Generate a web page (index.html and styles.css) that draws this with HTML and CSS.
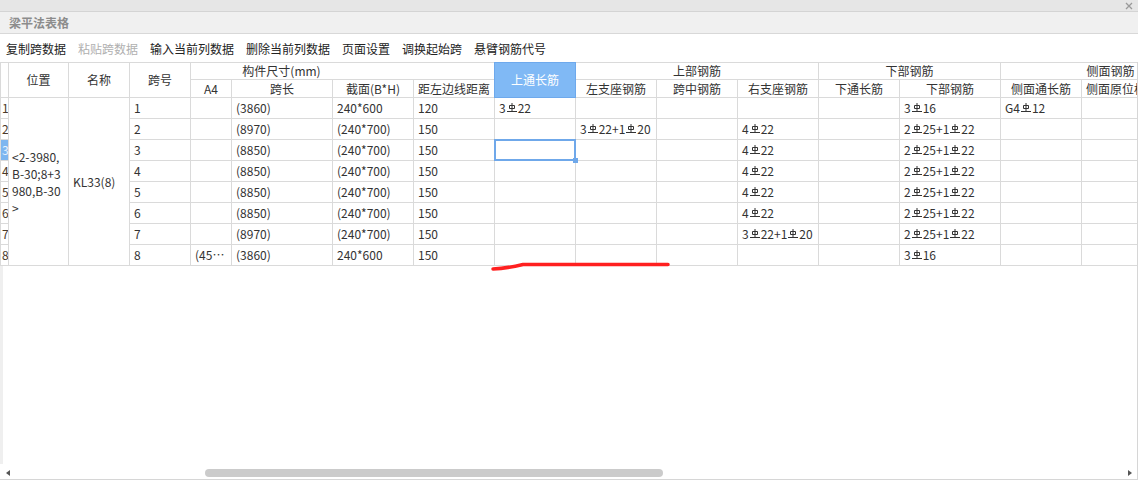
FILE: index.html
```html
<!DOCTYPE html>
<html lang="zh-CN">
<head>
<meta charset="utf-8">
<title>梁平法表格</title>
<link rel="stylesheet" href="styles.css">
</head>
<body>
<div class="window">
  <div class="topbar">
    <svg class="close" width="8" height="8" viewBox="0 0 8 8"><path d="M1 1L7 7M7 1L1 7"/></svg>
  </div>
  <div class="titlebar">梁平法表格</div>
  <div class="toolbar">
    <span class="tb">复制跨数据</span>
    <span class="tb disabled">粘贴跨数据</span>
    <span class="tb">输入当前列数据</span>
    <span class="tb">删除当前列数据</span>
    <span class="tb">页面设置</span>
    <span class="tb">调换起始跨</span>
    <span class="tb">悬臂钢筋代号</span>
  </div>
  <div class="sheet">
    <div class="grid-area">
      <div class="grid">
        <!-- header row 1 -->
        <div class="c h idx rs2"></div>
        <div class="c h rs2">位置</div>
        <div class="c h rs2">名称</div>
        <div class="c h rs2">跨号</div>
        <div class="c h cs4 grp-size">构件尺寸(mm)</div>
        <div class="c h rs2 active-head">上通长筋</div>
        <div class="c h cs3">上部钢筋</div>
        <div class="c h cs2">下部钢筋</div>
        <div class="c h cs3">侧面钢筋</div>
        <!-- header row 2 -->
        <div class="c h">A4</div>
        <div class="c h">跨长</div>
        <div class="c h">截面(B*H)</div>
        <div class="c h">距左边线距离</div>
        <div class="c h">左支座钢筋</div>
        <div class="c h">跨中钢筋</div>
        <div class="c h">右支座钢筋</div>
        <div class="c h">下通长筋</div>
        <div class="c h">下部钢筋</div>
        <div class="c h">侧面通长筋</div>
        <div class="c h">侧面原位标注</div>
        <div class="c h"></div>

        <!-- row 1 -->
        <div class="c idx">1</div>
        <div class="c pos rs8">&lt;2-3980,B-30;8+3980,B-30&gt;</div>
        <div class="c name rs8">KL33(8)</div>
        <div class="c">1</div>
        <div class="c"></div>
        <div class="c">(3860)</div>
        <div class="c">240*600</div>
        <div class="c">120</div>
        <div class="c">3<svg class="rb" viewBox="0 0 10 9"><path d="M5 0V8M2.5 2.5h5v3h-5zM0 8.5h10"/></svg>22</div>
        <div class="c"></div>
        <div class="c"></div>
        <div class="c"></div>
        <div class="c"></div>
        <div class="c">3<svg class="rb" viewBox="0 0 10 9"><path d="M5 0V8M2.5 2.5h5v3h-5zM0 8.5h10"/></svg>16</div>
        <div class="c">G4<svg class="rb" viewBox="0 0 10 9"><path d="M5 0V8M2.5 2.5h5v3h-5zM0 8.5h10"/></svg>12</div>
        <div class="c"></div>
        <div class="c"></div>

        <!-- row 2 -->
        <div class="c idx">2</div>
        <div class="c">2</div>
        <div class="c"></div>
        <div class="c">(8970)</div>
        <div class="c">(240*700)</div>
        <div class="c">150</div>
        <div class="c"></div>
        <div class="c">3<svg class="rb" viewBox="0 0 10 9"><path d="M5 0V8M2.5 2.5h5v3h-5zM0 8.5h10"/></svg>22+1<svg class="rb" viewBox="0 0 10 9"><path d="M5 0V8M2.5 2.5h5v3h-5zM0 8.5h10"/></svg>20</div>
        <div class="c"></div>
        <div class="c">4<svg class="rb" viewBox="0 0 10 9"><path d="M5 0V8M2.5 2.5h5v3h-5zM0 8.5h10"/></svg>22</div>
        <div class="c"></div>
        <div class="c">2<svg class="rb" viewBox="0 0 10 9"><path d="M5 0V8M2.5 2.5h5v3h-5zM0 8.5h10"/></svg>25+1<svg class="rb" viewBox="0 0 10 9"><path d="M5 0V8M2.5 2.5h5v3h-5zM0 8.5h10"/></svg>22</div>
        <div class="c"></div>
        <div class="c"></div>
        <div class="c"></div>

        <!-- row 3 -->
        <div class="c idx cur">3</div>
        <div class="c">3</div>
        <div class="c"></div>
        <div class="c">(8850)</div>
        <div class="c">(240*700)</div>
        <div class="c">150</div>
        <div class="c selected"></div>
        <div class="c"></div>
        <div class="c"></div>
        <div class="c">4<svg class="rb" viewBox="0 0 10 9"><path d="M5 0V8M2.5 2.5h5v3h-5zM0 8.5h10"/></svg>22</div>
        <div class="c"></div>
        <div class="c">2<svg class="rb" viewBox="0 0 10 9"><path d="M5 0V8M2.5 2.5h5v3h-5zM0 8.5h10"/></svg>25+1<svg class="rb" viewBox="0 0 10 9"><path d="M5 0V8M2.5 2.5h5v3h-5zM0 8.5h10"/></svg>22</div>
        <div class="c"></div>
        <div class="c"></div>
        <div class="c"></div>

        <!-- row 4 -->
        <div class="c idx">4</div>
        <div class="c">4</div>
        <div class="c"></div>
        <div class="c">(8850)</div>
        <div class="c">(240*700)</div>
        <div class="c">150</div>
        <div class="c"></div>
        <div class="c"></div>
        <div class="c"></div>
        <div class="c">4<svg class="rb" viewBox="0 0 10 9"><path d="M5 0V8M2.5 2.5h5v3h-5zM0 8.5h10"/></svg>22</div>
        <div class="c"></div>
        <div class="c">2<svg class="rb" viewBox="0 0 10 9"><path d="M5 0V8M2.5 2.5h5v3h-5zM0 8.5h10"/></svg>25+1<svg class="rb" viewBox="0 0 10 9"><path d="M5 0V8M2.5 2.5h5v3h-5zM0 8.5h10"/></svg>22</div>
        <div class="c"></div>
        <div class="c"></div>
        <div class="c"></div>

        <!-- row 5 -->
        <div class="c idx">5</div>
        <div class="c">5</div>
        <div class="c"></div>
        <div class="c">(8850)</div>
        <div class="c">(240*700)</div>
        <div class="c">150</div>
        <div class="c"></div>
        <div class="c"></div>
        <div class="c"></div>
        <div class="c">4<svg class="rb" viewBox="0 0 10 9"><path d="M5 0V8M2.5 2.5h5v3h-5zM0 8.5h10"/></svg>22</div>
        <div class="c"></div>
        <div class="c">2<svg class="rb" viewBox="0 0 10 9"><path d="M5 0V8M2.5 2.5h5v3h-5zM0 8.5h10"/></svg>25+1<svg class="rb" viewBox="0 0 10 9"><path d="M5 0V8M2.5 2.5h5v3h-5zM0 8.5h10"/></svg>22</div>
        <div class="c"></div>
        <div class="c"></div>
        <div class="c"></div>

        <!-- row 6 -->
        <div class="c idx">6</div>
        <div class="c">6</div>
        <div class="c"></div>
        <div class="c">(8850)</div>
        <div class="c">(240*700)</div>
        <div class="c">150</div>
        <div class="c"></div>
        <div class="c"></div>
        <div class="c"></div>
        <div class="c">4<svg class="rb" viewBox="0 0 10 9"><path d="M5 0V8M2.5 2.5h5v3h-5zM0 8.5h10"/></svg>22</div>
        <div class="c"></div>
        <div class="c">2<svg class="rb" viewBox="0 0 10 9"><path d="M5 0V8M2.5 2.5h5v3h-5zM0 8.5h10"/></svg>25+1<svg class="rb" viewBox="0 0 10 9"><path d="M5 0V8M2.5 2.5h5v3h-5zM0 8.5h10"/></svg>22</div>
        <div class="c"></div>
        <div class="c"></div>
        <div class="c"></div>

        <!-- row 7 -->
        <div class="c idx">7</div>
        <div class="c">7</div>
        <div class="c"></div>
        <div class="c">(8970)</div>
        <div class="c">(240*700)</div>
        <div class="c">150</div>
        <div class="c"></div>
        <div class="c"></div>
        <div class="c"></div>
        <div class="c">3<svg class="rb" viewBox="0 0 10 9"><path d="M5 0V8M2.5 2.5h5v3h-5zM0 8.5h10"/></svg>22+1<svg class="rb" viewBox="0 0 10 9"><path d="M5 0V8M2.5 2.5h5v3h-5zM0 8.5h10"/></svg>20</div>
        <div class="c"></div>
        <div class="c">2<svg class="rb" viewBox="0 0 10 9"><path d="M5 0V8M2.5 2.5h5v3h-5zM0 8.5h10"/></svg>25+1<svg class="rb" viewBox="0 0 10 9"><path d="M5 0V8M2.5 2.5h5v3h-5zM0 8.5h10"/></svg>22</div>
        <div class="c"></div>
        <div class="c"></div>
        <div class="c"></div>

        <!-- row 8 -->
        <div class="c idx">8</div>
        <div class="c">8</div>
        <div class="c ell">(4500)</div>
        <div class="c">(3860)</div>
        <div class="c">240*600</div>
        <div class="c">150</div>
        <div class="c"></div>
        <div class="c"></div>
        <div class="c"></div>
        <div class="c"></div>
        <div class="c"></div>
        <div class="c">3<svg class="rb" viewBox="0 0 10 9"><path d="M5 0V8M2.5 2.5h5v3h-5zM0 8.5h10"/></svg>16</div>
        <div class="c"></div>
        <div class="c"></div>
        <div class="c"></div>
      </div>
    </div>
    <div class="hscroll">
      <span class="arrow left"></span>
      <span class="thumb"></span>
      <span class="spacer"></span>
      <span class="arrow right"></span>
    </div>
  </div>
  <svg class="mark" width="184" height="16" viewBox="0 0 184 16"><path d="M3 11 Q 16 10.5 33 6.5 L 178 6.5"/></svg>
</div>
</body>
</html>
```

FILE: styles.css
```css
* { box-sizing: border-box; }
html, body { margin: 0; padding: 0; background: #fff; }
body {
  font-family: "Noto Sans CJK SC", "Noto Sans", sans-serif;
  font-size: 12px;
  color: #333;
}
.window {
  position: relative;
  width: 1138px;
  height: 480px;
  overflow: hidden;
}
.topbar {
  height: 12px;
  background: #e6e6e6;
  border-bottom: 1px solid #d4d4d4;
  display: flex;
  justify-content: flex-end;
  align-items: flex-start;
  padding: 2px 5px 0 0;
}
.close path { stroke: #9a9a9a; stroke-width: 1.3; fill: none; }
.titlebar {
  height: 22px;
  background: #f0f0f0;
  border-bottom: 1px solid #d8d8d8;
  padding-left: 9px;
  line-height: 21px;
  font-weight: bold;
  color: #8c8c8c;
  font-size: 12px;
}
.toolbar {
  height: 28px;
  display: flex;
  align-items: center;
  padding-left: 6px;
  gap: 12px;
  background: #fff;
}
.tb { color: #222; white-space: nowrap; }
.tb.disabled { color: #b0b0b0; }

.sheet {
  width: 1138px;
  height: 418px;
  border-right: 1px solid #d6d6d6;
  border-bottom: 1px solid #d6d6d6;
}
.grid-area {
  height: 402px;
  overflow: hidden;
  background: linear-gradient(to right, #efefef 3px, #fff 3px);
}
.grid {
  display: grid;
  width: max-content;
  background: #dadada;
  padding: 1px;
  gap: 1px;
  grid-template-columns: 7px 59px 60px 60px 40px 100px 80px 80px 80px 80px 80px 80px 80px 100px 80px 80px 57px;
  grid-template-rows: 16px 17px repeat(8, 20px);
}
.c {
  background: #fff;
  padding: 0 4px;
  line-height: 20px;
  white-space: nowrap;
  overflow: hidden;
  color: #333;
}
.h {
  display: flex;
  align-items: center;
  justify-content: center;
  padding: 0;
  line-height: 16px;
}
.rs2 { grid-row: span 2; }
.rs8 { grid-row: span 8; }
.cs2 { grid-column: span 2; }
.cs3 { grid-column: span 3; }
.cs4 { grid-column: span 4; }
.grp-size { padding-right: 122px; }
.active-head {
  background: #80b9f5;
  color: #fff;
  position: relative;
  box-shadow: 0 0 0 1px #6ea9ec;
  z-index: 1;
}
.idx {
  padding: 0 0 0 1px;
  color: #4a3a2a;
  overflow: hidden;
}
.idx.cur { background: #7db6f0; color: #e8f2ff; }
.pos {
  white-space: normal;
  word-break: break-all;
  line-height: 17px;
  padding: 0 3px;
  display: flex;
  align-items: center;
}
.name {
  display: flex;
  align-items: center;
}
.ell { text-overflow: ellipsis; }
.selected {
  position: relative;
  overflow: visible;
  z-index: 2;
}
.selected::after {
  content: "";
  position: absolute;
  left: -1px; top: -1px; right: -1px; bottom: -1px;
  border: 2px solid #6fa8ea;
}
.selected::before {
  content: "";
  position: absolute;
  right: -3px;
  bottom: -3px;
  width: 5px;
  height: 5px;
  background: #6fa8ea;
  z-index: 1;
}
.rb {
  width: 10px;
  height: 9px;
  margin: 0 1px;
  vertical-align: 1px;
  overflow: visible;
}
.rb path { stroke: #333; stroke-width: 1; fill: none; }

.hscroll {
  height: 15px;
  display: flex;
  align-items: center;
  padding: 2px 5px 0 6px;
}
.arrow { width: 0; height: 0; border-top: 3.5px solid transparent; border-bottom: 3.5px solid transparent; }
.arrow.left { border-right: 4px solid #555; }
.arrow.right { border-left: 4px solid #555; }
.thumb {
  margin-left: 195px;
  width: 458px;
  height: 8px;
  border-radius: 4px;
  background: #cbcbcb;
}
.spacer { flex: 1; }

.mark {
  position: absolute;
  left: 490px;
  top: 258px;
}
.mark path { stroke: #ff2020; stroke-width: 3.5; fill: none; stroke-linecap: round; }
```
